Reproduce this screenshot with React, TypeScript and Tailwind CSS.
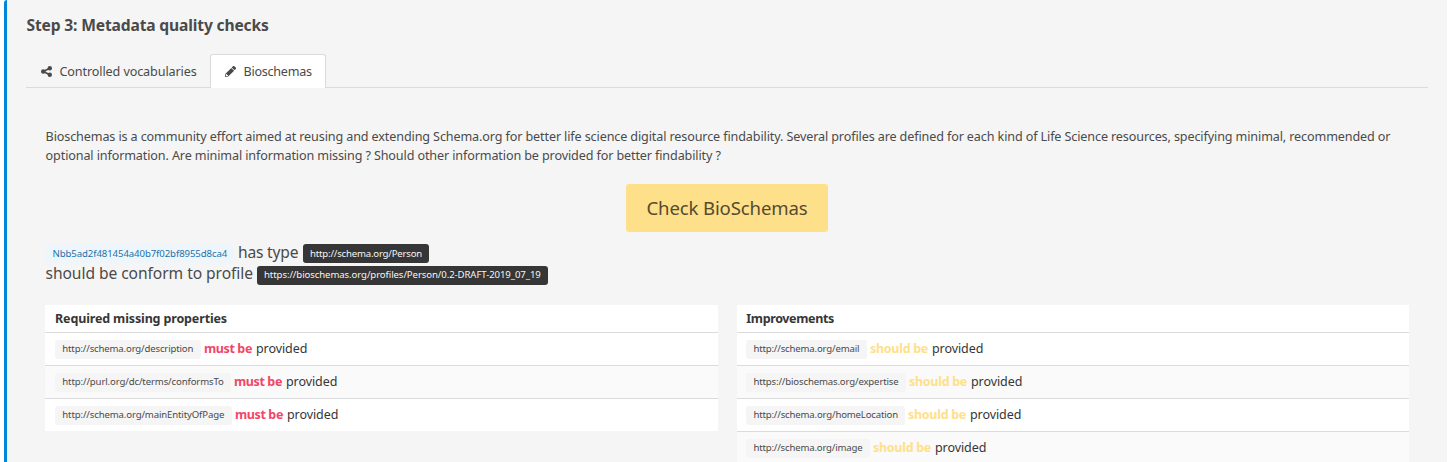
type Row = { url: string; box: string };

const required: Row[] = [
  { url: "http://schema.org/description", box: "w-[146px] tracking-[-0.16px]" },
  { url: "http://purl.org/dc/terms/conformsTo", box: "w-[176px] tracking-[-0.13px]" },
  { url: "http://schema.org/mainEntityOfPage", box: "w-[177px] tracking-[-0.14px]" },
];

const improvements: Row[] = [
  { url: "http://schema.org/email", box: "w-[121px] tracking-[-0.17px]" },
  { url: "https://bioschemas.org/expertise", box: "w-[160px] tracking-[-0.15px]" },
  { url: "http://schema.org/homeLocation", box: "w-[159px] tracking-[-0.17px]" },
  { url: "http://schema.org/image", box: "w-[124px] tracking-[-0.18px]" },
];

function ShareIcon() {
  return (
    <svg className="h-[11px] w-[11px] shrink-0" viewBox="0 0 11 11" fill="#4a4a4a">
      <circle cx="8.8" cy="2.2" r="2.2" />
      <circle cx="8.8" cy="8.8" r="2.2" />
      <circle cx="2.2" cy="5.5" r="2.2" />
      <path d="M8.8 2.2L2.2 5.5L8.8 8.8" fill="none" stroke="#4a4a4a" strokeWidth="1.6" />
    </svg>
  );
}

function PencilIcon() {
  return (
    <svg className="h-[11px] w-[11px] shrink-0" viewBox="0 0 512 512" fill="#4a4a4a">
      <path d="M497.9 142.1l-46.1 46.1c-4.7 4.7-12.3 4.7-17 0l-111-111c-4.7-4.7-4.7-12.3 0-17l46.1-46.1c18.7-18.7 49.1-18.7 67.9 0l60.1 60.1c18.8 18.7 18.8 49.1 0 67.9zM284.2 99.8L21.6 362.4.4 483.9c-2.9 16.4 11.4 30.6 27.8 27.8l121.5-21.3 262.6-262.6c4.7-4.7 4.7-12.3 0-17l-111-111c-4.8-4.7-12.4-4.7-17.1 0zM88 424h48v36.3l-64.5 11.3-31.1-31.1L51.7 376H88v48z" />
    </svg>
  );
}

function Table({ title, titleClass, rows, level }: { title: string; titleClass: string; rows: Row[]; level: "must" | "should" }) {
  const inset = level === "must" ? "ml-[10px] pl-[7.3px]" : "ml-[9px] pl-[7.4px]";
  return (
    <div className="bg-white text-[12.5px] text-[#363636]">
      <div className={"h-[27px] leading-[27px] font-bold " + titleClass}>{title}</div>
      {rows.map((row) => (
        <div key={row.url} className="flex h-[33px] items-start border-t border-[#dbdbdb] pt-[7px] odd:bg-[#fafafa] even:bg-white">
          <span className={"h-[19px] shrink-0 rounded-[3px] bg-[#f5f5f5] text-[9.6px] leading-[18px] text-[#4a4a4a] " + inset + " " + row.box}>
            {row.url}
          </span>
          <span className="ml-[3px] flex leading-[17px]">
            {level === "must" ? (
              <b className="w-[52px] tracking-[-0.38px] text-[#f14668]">must be</b>
            ) : (
              <b className="w-[62px] tracking-[-0.28px] text-[#ffe08a]">should be</b>
            )}
            <span className="tracking-[-0.08px]">provided</span>
          </span>
        </div>
      ))}
    </div>
  );
}

export default function App() {
  return (
    <div className="h-[462px] overflow-hidden bg-white pr-[5px] pl-[4px] font-['Noto_Sans',sans-serif] whitespace-nowrap text-[#4a4a4a]">
      <section className="h-[480px] rounded-tl-[3px] border-l-[3px] border-[#0087dc] bg-[#f5f5f5] pr-[19px] pl-[19px]">
        <h1 className="h-[54px] pt-[14px] pl-[0.5px] text-[15.6px] leading-[22px] font-bold tracking-[-0.15px]">Step 3: Metadata quality checks</h1>

        <nav className="flex h-[34px] border-b border-[#dbdbdb] text-[12.6px] leading-[34px]">
          <a className="flex h-[34px] w-[184px] items-center pl-[15px] tracking-[-0.11px]">
            <ShareIcon />
            <span className="mt-px ml-[7.5px]">Controlled vocabularies</span>
          </a>
          <a className="flex h-[34px] w-[116px] items-center rounded-t-[3px] border border-b-0 border-[#dbdbdb] bg-white pl-[14px] tracking-[-0.26px]">
            <PencilIcon />
            <span className="ml-[7.5px]">Bioschemas</span>
          </a>
        </nav>

        <main className="pr-[19px] pl-[19px]">
          <p className="pt-[39px] pl-[0.6px] text-[12.6px] leading-[19px]">
            <span className="block tracking-[-0.123px]">
              Bioschemas is a community effort aimed at reusing and extending Schema.org for better life science digital resource findability. Several profiles are defined for each kind of Life Science resources, specifying minimal, recommended or
            </span>
            <span className="block tracking-[-0.123px]">
              optional information. Are minimal information missing ? Should other information be provided for better findability ?
            </span>
          </p>

          <div className="mt-[19px] flex justify-center">
            <button className="h-[48px] w-[202px] rounded-[3px] bg-[#ffe08a] text-[18.6px] leading-[48px] tracking-[-0.14px] text-[#544b30]">Check BioSchemas</button>
          </div>

          <div className="mt-[9px] text-[15.6px]">
            <div className="flex h-[22px] items-start leading-[22px]">
              <span className="mt-[3px] h-[19px] w-[189px] rounded-[3px] bg-[#eef6fc] pl-[7.5px] text-[9.6px] leading-[19px] tracking-[-0.09px] text-[#1d72aa]">
                Nbb5ad2f481454a40b7f02bf8955d8ca4
              </span>
              <span className="ml-[4px] w-[65px] tracking-[-0.2px]">has type</span>
              <span className="mt-[3px] h-[19px] w-[126px] rounded-[3px] bg-[#363636] pl-[7px] text-[9.6px] leading-[19px] tracking-[-0.19px] text-[#f5f5f5]">
                http://schema.org/Person
              </span>
            </div>
            <div className="flex h-[22px] items-start leading-[20px]">
              <span className="w-[212px] pl-[0.5px] tracking-[-0.06px]">should be conform to profile</span>
              <span className="mt-[3px] h-[19px] w-[291px] rounded-[3px] bg-[#363636] pl-[7px] text-[9.6px] leading-[18px] tracking-[-0.09px] text-[#f5f5f5]">
                https://bioschemas.org/profiles/Person/0.2-DRAFT-2019_07_19
              </span>
            </div>
          </div>

          <div className="mt-[20px] grid grid-cols-[673px_672px] items-start gap-[19px]">
            <Table title="Required missing properties" titleClass="pl-[10px] tracking-[-0.14px]" rows={required} level="must" />
            <Table title="Improvements" titleClass="pl-[9.3px] tracking-[-0.36px]" rows={improvements} level="should" />
          </div>
        </main>
      </section>
    </div>
  );
}
